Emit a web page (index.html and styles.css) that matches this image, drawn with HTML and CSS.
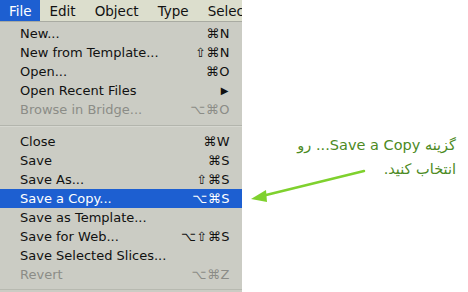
FILE: index.html
```html
<!DOCTYPE html>
<html>
<head>
<meta charset="utf-8">
<link rel="stylesheet" href="styles.css">
</head>
<body>
<div class="page">
  <div class="panel">
    <div class="menubar">
      <span class="mb-item active">File</span>
      <span class="mb-item">Edit</span>
      <span class="mb-item">Object</span>
      <span class="mb-item">Type</span>
      <span class="mb-item">Select</span>
    </div>
    <div class="menu">
      <div class="row"><span>New...</span><span class="key">⌘N</span></div>
      <div class="row"><span>New from Template...</span><span class="key">⇧⌘N</span></div>
      <div class="row"><span>Open...</span><span class="key">⌘O</span></div>
      <div class="row"><span>Open Recent Files</span><span class="key arrow">▶</span></div>
      <div class="row disabled"><span>Browse in Bridge...</span><span class="key">⌥⌘O</span></div>
      <div class="sep"></div>
      <div class="row"><span>Close</span><span class="key">⌘W</span></div>
      <div class="row"><span>Save</span><span class="key">⌘S</span></div>
      <div class="row"><span>Save As...</span><span class="key">⇧⌘S</span></div>
      <div class="row selected"><span>Save a Copy...</span><span class="key">⌥⌘S</span></div>
      <div class="row"><span>Save as Template...</span><span class="key"></span></div>
      <div class="row"><span>Save for Web...</span><span class="key">⌥⇧⌘S</span></div>
      <div class="row"><span>Save Selected Slices...</span><span class="key"></span></div>
      <div class="row disabled"><span>Revert</span><span class="key">⌥⌘Z</span></div>
    </div>
  </div>
  <div class="note">
    <p class="caption" dir="rtl">گزینه <bdi dir="ltr">...Save a Copy</bdi> رو<br>انتخاب کنید.</p>
    <svg class="arrow-svg" width="226" height="292" viewBox="242 0 226 292">
      <line x1="364" y1="171" x2="262" y2="196" stroke="#7fd12e" stroke-width="2.5" stroke-linecap="round"/>
      <polygon points="251,199 266,190 267,202" fill="#7fd12e"/>
    </svg>
  </div>
</div>
</body>
</html>
```

FILE: styles.css
```css
html, body {
  margin: 0;
  padding: 0;
  background: #ffffff;
}
.page {
  display: flex;
  width: 468px;
  height: 292px;
  overflow: hidden;
}
.panel {
  width: 242px;
  flex: none;
  background: #cbccc4;
  display: flex;
  flex-direction: column;
  font-family: "DejaVu Sans", "Liberation Sans", sans-serif;
}
.menubar {
  height: 21px;
  background: #dcdecd;
  border-bottom: 1px solid #a9aba2;
  display: flex;
  align-items: stretch;
  font-size: 13.5px;
  color: #111;
  overflow: hidden;
  white-space: nowrap;
}
.mb-item {
  flex: none;
  display: flex;
  align-items: center;
  padding: 0 9.5px;
}
.mb-item.active {
  background: #1d5fd1;
  color: #fff;
  padding: 0 0 0 9px;
  width: 31px;
}
.menu {
  padding-top: 2px;
  flex: 1;
  border-bottom: 1px solid #b7b9b0;
  margin-bottom: 2px;
}
.row {
  height: 19px;
  display: flex;
  align-items: center;
  justify-content: space-between;
  padding: 0 12px 0 20px;
  font-size: 13px;
  color: #111;
}
.row .key {
  font-family: "DejaVu Sans", sans-serif;
  font-size: 13px;
  letter-spacing: 0.5px;
}
.row .arrow {
  font-size: 10px;
  margin-right: 1px;
}
.row.disabled {
  color: #8b8c87;
}
.row.selected {
  background: #1d5fd1;
  color: #fff;
}
.sep {
  height: 13px;
  display: flex;
  align-items: center;
}
.sep::before {
  content: "";
  display: block;
  width: 100%;
  height: 1px;
  background: #b3b5ad;
  box-shadow: 0 1px 0 #d6d7d0;
}
.note {
  flex: 1;
  position: relative;
}
.caption {
  margin: 0;
  position: absolute;
  right: 12px;
  top: 133px;
  width: 200px;
  text-align: right;
  font-family: "DejaVu Sans", sans-serif;
  font-size: 14.5px;
  line-height: 24px;
  color: #4c8a23;
}
.arrow-svg {
  position: absolute;
  left: 0;
  top: 0;
}
```
